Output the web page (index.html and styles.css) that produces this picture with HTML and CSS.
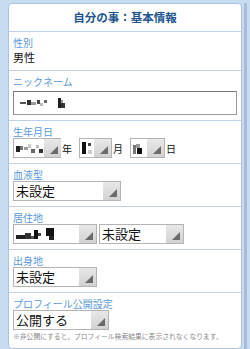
FILE: index.html
```html
<!DOCTYPE html>
<html lang="ja">
<head>
    <meta charset="UTF-8">
    <meta name="viewport" content="width=device-width, initial-scale=1.0">
    <title>自分の事：基本情報</title>
    <link rel="stylesheet" href="styles.css">
</head>
<body>
    <div class="page">
        <div class="card">
            <div class="title">自分の事：基本情報</div>

            <div class="row">
                <div class="label">性別</div>
                <div class="value">男性</div>
            </div>

            <div class="row">
                <div class="label">ニックネーム</div>
                <div class="input">
                    <svg width="48" height="13" viewBox="0 0 48 13">
                        <rect x="0" y="5" width="6" height="2" fill="#555"/>
                        <rect x="7" y="3" width="4" height="5" fill="#333"/>
                        <rect x="11" y="5" width="5" height="3" fill="#999"/>
                        <rect x="17" y="3" width="3" height="4" fill="#444"/>
                        <rect x="20" y="6" width="3" height="3" fill="#bbb"/>
                        <rect x="24" y="3" width="3" height="3" fill="#666"/>
                        <rect x="38" y="1" width="3" height="10" fill="#222"/>
                        <rect x="41" y="6" width="4" height="5" fill="#333"/>
                        <rect x="41" y="3" width="2" height="3" fill="#999"/>
                    </svg>
                </div>
            </div>

            <div class="row">
                <div class="label">生年月日</div>
                <div class="line">
                    <div class="select w-year">
                        <svg width="28" height="11" viewBox="0 0 28 11">
                            <rect x="0" y="3" width="4" height="6" fill="#222"/>
                            <rect x="4" y="3" width="3" height="4" fill="#777"/>
                            <rect x="8" y="4" width="4" height="3" fill="#999"/>
                            <rect x="12" y="1" width="3" height="4" fill="#ccc"/>
                            <rect x="15" y="6" width="4" height="4" fill="#666"/>
                            <rect x="20" y="2" width="3" height="3" fill="#bbb"/>
                            <rect x="23" y="6" width="4" height="4" fill="#333"/>
                        </svg>
                        <span class="arrow"></span>
                    </div>
                    <span class="unit">年</span>
                    <div class="select w-month">
                        <svg width="12" height="12" viewBox="0 0 12 12">
                            <rect x="0" y="0" width="4" height="12" fill="#111"/>
                            <rect x="6" y="1" width="3" height="3" fill="#444"/>
                            <rect x="6" y="8" width="4" height="4" fill="#ccc"/>
                        </svg>
                        <span class="arrow"></span>
                    </div>
                    <span class="unit">月</span>
                    <div class="select w-day">
                        <svg width="12" height="12" viewBox="0 0 12 12">
                            <rect x="0" y="3" width="3" height="9" fill="#777"/>
                            <rect x="3" y="2" width="4" height="4" fill="#999"/>
                            <rect x="4" y="6" width="5" height="6" fill="#111"/>
                        </svg>
                        <span class="arrow"></span>
                    </div>
                    <span class="unit">日</span>
                </div>
            </div>

            <div class="row">
                <div class="label">血液型</div>
                <div class="select w-blood">
                    <span class="text">未設定</span>
                    <span class="arrow"></span>
                </div>
            </div>

            <div class="row">
                <div class="label">居住地</div>
                <div class="line">
                    <div class="select w-pref">
                        <svg width="42" height="13" viewBox="0 0 42 13">
                            <rect x="0" y="7" width="9" height="4" fill="#222"/>
                            <rect x="9" y="5" width="6" height="6" fill="#333"/>
                            <rect x="15" y="8" width="3" height="3" fill="#555"/>
                            <rect x="18" y="2" width="4" height="9" fill="#111"/>
                            <rect x="22" y="5" width="3" height="3" fill="#444"/>
                            <rect x="30" y="0" width="8" height="8" fill="#111"/>
                            <rect x="33" y="8" width="5" height="4" fill="#222"/>
                        </svg>
                        <span class="arrow"></span>
                    </div>
                    <div class="select w-city">
                        <span class="text">未設定</span>
                        <span class="arrow"></span>
                    </div>
                </div>
            </div>

            <div class="row">
                <div class="label">出身地</div>
                <div class="select w-pref">
                    <span class="text">未設定</span>
                    <span class="arrow"></span>
                </div>
            </div>

            <div class="row last">
                <div class="label">プロフィール公開設定</div>
                <div class="select w-open">
                    <span class="text">公開する</span>
                    <span class="arrow"></span>
                </div>
                <div class="note">※非公開にすると、プロフィール検索結果に表示されなくなります。</div>
            </div>

            <div class="row"></div>
        </div>
        <div class="scroll"></div>
    </div>
</body>
</html>
```

FILE: styles.css
```css
body {
    margin: 0;
    background-color: #c8dcf1;
    font-family: "Noto Sans CJK JP", "Noto Sans", sans-serif;
    overflow: hidden;
}
.page {
    display: flex;
    padding: 3px 3px 0 8px;
    height: 346px;
}
.card {
    width: 232px;
    background-color: #fff;
    border: 1px solid #aac3e2;
    border-radius: 4px;
    overflow: hidden;
}
.scroll {
    width: 3px;
    margin-left: 2px;
    background-color: #a8bcd5;
}
.title {
    height: 27px;
    line-height: 27px;
    text-align: center;
    font-size: 11.5px;
    font-weight: bold;
    color: #22558f;
    border-bottom: 1px solid #bcd1ea;
}
.row {
    padding: 4px 4px 5px;
    border-bottom: 1px solid #bcd1ea;
}
.row.last {
    padding-bottom: 6px;
}
.label {
    height: 13px;
    line-height: 13px;
    font-size: 10px;
    color: #5b9ad8;
}
.value {
    line-height: 15px;
    font-size: 11px;
    color: #111;
    padding-top: 1px;
}
.input {
    margin-top: 3px;
    height: 24px;
    box-sizing: border-box;
    border: 1px solid #9a9a9a;
    border-top-color: #777;
    border-left-color: #888;
    padding-left: 6px;
    display: flex;
    align-items: center;
}
.line {
    display: flex;
    align-items: center;
}
.select {
    height: 20px;
    box-sizing: border-box;
    border: 1px solid #b4b4b4;
    background-color: #fff;
    display: flex;
    align-items: center;
    padding-left: 2px;
}
.select .text {
    flex: 1;
    font-size: 13px;
    line-height: 18px;
    color: #111;
}
.select svg {
    flex: none;
}
.arrow {
    margin-left: auto;
    width: 17px;
    height: 18px;
    background: linear-gradient(to bottom, #e8e8e8, #d2d2d2);
    position: relative;
    flex: none;
}
.arrow::after {
    content: "";
    position: absolute;
    right: 3px;
    bottom: 3px;
    width: 0;
    height: 0;
    border-left: 8px solid transparent;
    border-bottom: 8px solid #6b6b6b;
}
.unit {
    font-size: 10px;
    color: #111;
    margin: 0 7px 0 1px;
}
.w-year { width: 48px; }
.w-month { width: 33px; }
.w-day { width: 35px; }
.w-blood { width: 108px; }
.w-pref { width: 84px; margin-right: 2px; }
.w-city { width: 85px; }
.w-open { width: 96px; }
.note {
    font-size: 6.8px;
    line-height: 11px;
    color: #8a8a8a;
    margin-top: 1px;
    white-space: nowrap;
}
```
